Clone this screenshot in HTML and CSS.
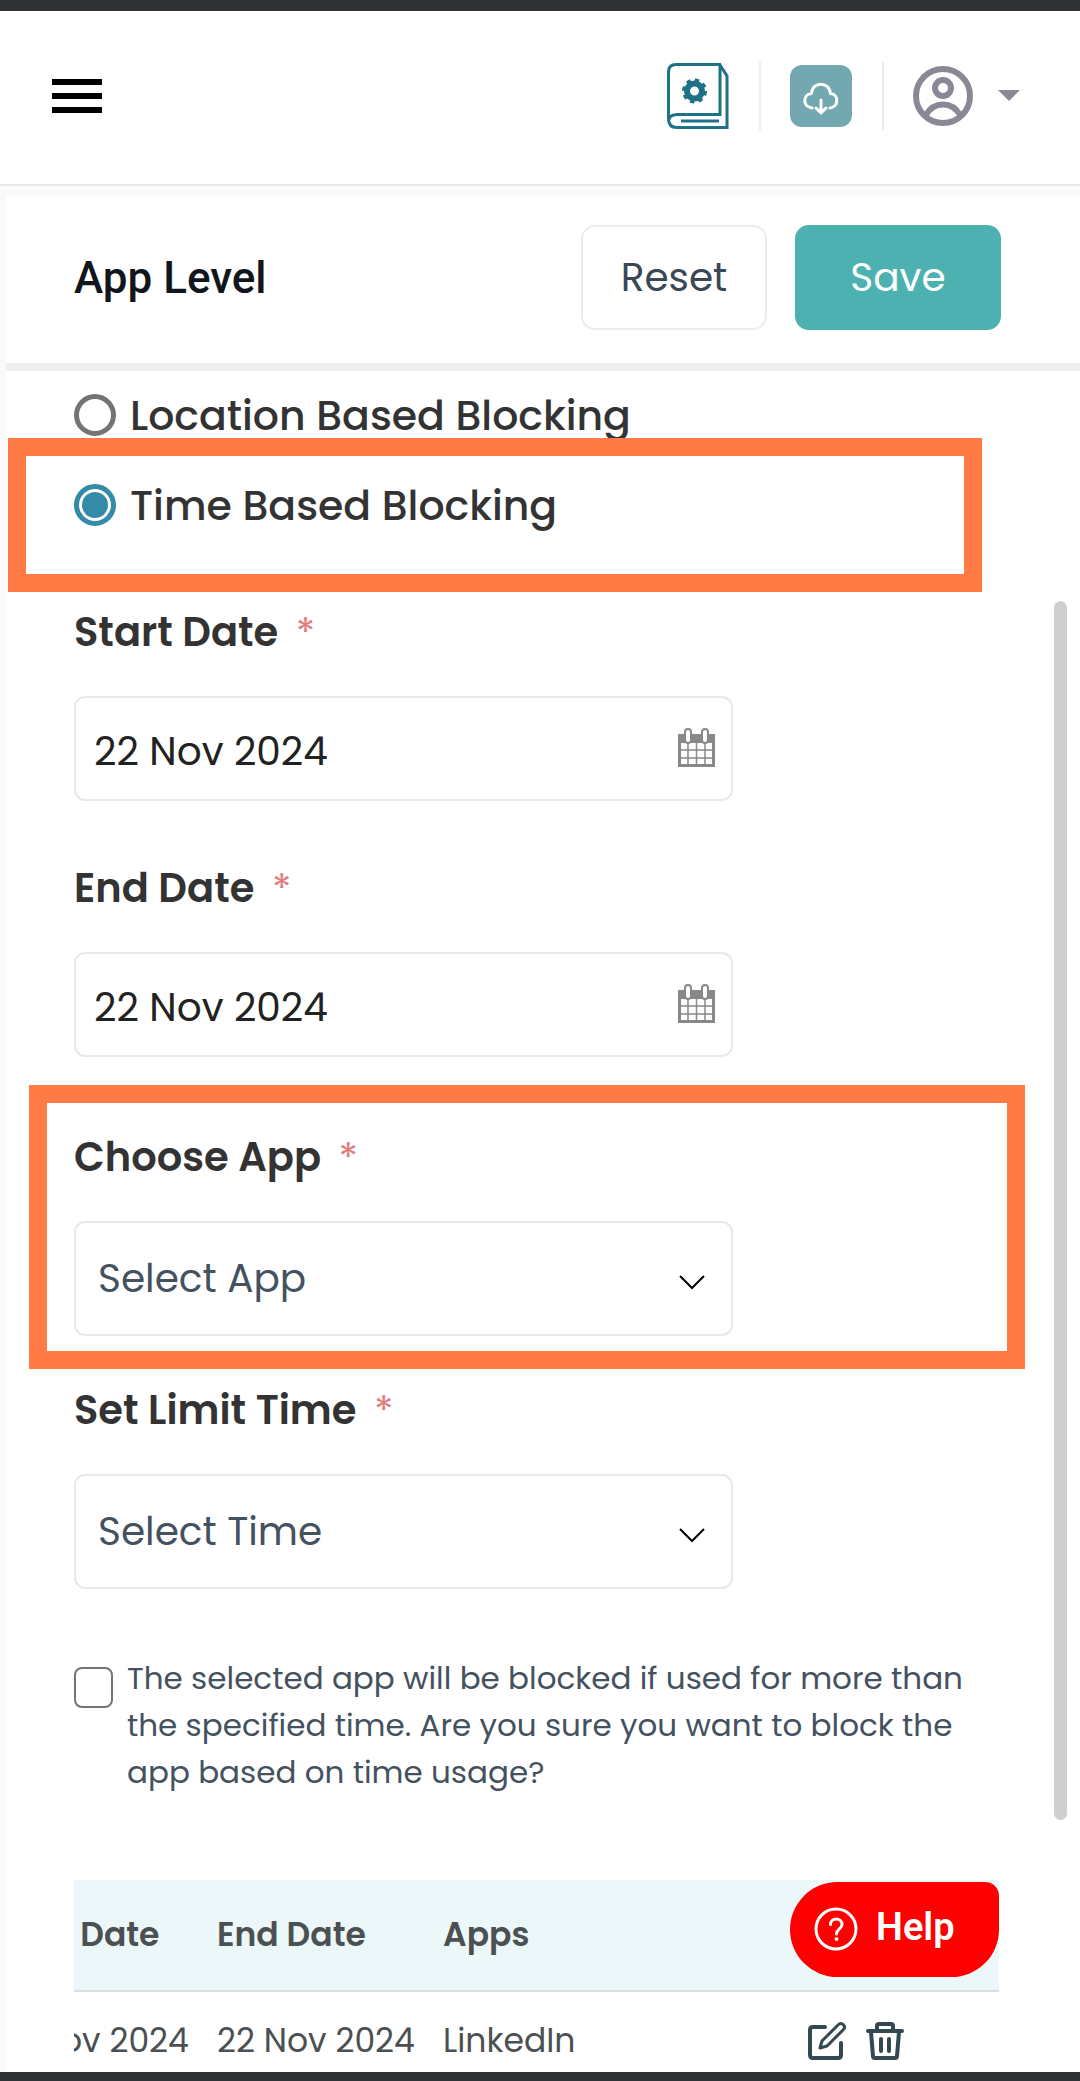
FILE: index.html
```html
<!DOCTYPE html>
<html lang="en">
<head>
<meta charset="utf-8">
<meta name="viewport" content="width=device-width, initial-scale=1">
<title>App Level</title>
<link rel="stylesheet" href="styles.css">
</head>
<body>
<header class="topbar">
  <button class="icon-button" type="button" aria-label="Menu">
    <svg width="50" height="34" viewBox="0 0 50 34"><path d="M0 3h50M0 17h50M0 31h50" stroke="#000" stroke-width="6"/></svg>
  </button>
  <nav class="tools" aria-label="Tools">
    <a class="tool" href="#guide" aria-label="User guide">
      <svg width="62" height="66" viewBox="0 0 62 66" fill="none" stroke="#1f7185" stroke-width="3">
        <path d="M54 1.500H9Q1.500 1.500 1.500 9V56Q1.500 64.500 10 64.500H60V13L53 2V51.500H10Q1.500 52 1.500 58M14 58H52"/>
        <circle cx="27.500" cy="28" r="7.500" stroke-width="6"/>
        <circle cx="27.500" cy="28" r="10.500" stroke-width="4" stroke-dasharray="4.200 4.047"/>
      </svg>
    </a>
    <a class="tool tool-split" href="#download" aria-label="Download">
      <span class="tile">
        <svg width="36" height="34" viewBox="0 0 36 34" fill="none" stroke="#fff" stroke-width="3" stroke-linecap="round" stroke-linejoin="round"><path d="M9 26C-1 25 0 12 8.500 11.500C9.500-1 26-1 27.500 11.500C36 12 36 25 27 26M18 18V30M13 26L18 31L23 26"/></svg>
      </span>
    </a>
    <a class="tool tool-split" href="#account" aria-label="Account">
      <svg width="60" height="60" viewBox="0 0 60 60" fill="none" stroke="#898896" stroke-width="6"><circle cx="30" cy="30" r="27"/><circle cx="30" cy="22" r="8"/><path d="M13 49C21 35 39 35 47 49"/></svg>
      <svg class="caret" width="22" height="11" viewBox="0 0 22 11"><path d="M0 0h22L11 11z" fill="#898896"/></svg>
    </a>
  </nav>
</header>
<main class="page">
  <div class="page-head">
    <h1>App Level</h1>
    <button class="btn btn-plain" type="reset" form="rules">Reset</button>
    <button class="btn btn-primary" type="submit" form="rules">Save</button>
  </div>
  <form class="rules" id="rules">
    <label class="radio-row"><input type="radio" name="mode" value="location">Location Based Blocking</label>
    <div class="marked marked-mode">
      <label class="radio-row"><input type="radio" name="mode" value="time" checked>Time Based Blocking</label>
    </div>
    <div class="field field-start">
      <label for="start">Start Date <span class="req">*</span></label>
      <div class="control">
        <input class="box" id="start" type="text" value="22 Nov 2024">
        <svg class="mark" width="37" height="40" viewBox="0 0 37 40"><use href="#calendar"/></svg>
      </div>
    </div>
    <div class="field">
      <label for="end">End Date <span class="req">*</span></label>
      <div class="control">
        <input class="box" id="end" type="text" value="22 Nov 2024">
        <svg class="mark" width="37" height="40" viewBox="0 0 37 40"><g id="calendar"><path d="M1.500 8h34v29.500h-34z" fill="#fff" stroke="#888" stroke-width="3"/><path d="M0 6h37v9H0z" fill="#888"/><path d="M10 14v24M18.500 14v24M27 14v24M2 22h33M2 30h33" stroke="#888" stroke-width="1.500"/><rect x="7" y="1" width="6" height="14" rx="3" fill="#fff" stroke="#888" stroke-width="2"/><rect x="24" y="1" width="6" height="14" rx="3" fill="#fff" stroke="#888" stroke-width="2"/></g></svg>
      </div>
    </div>
    <div class="field marked marked-app">
      <label for="app">Choose App <span class="req">*</span></label>
      <div class="control">
        <select class="box" id="app"><option>Select App</option></select>
        <svg class="mark chevron" width="26" height="15" viewBox="0 0 26 15"><path d="M1 1l12 12L25 1" fill="none" stroke="#000" stroke-width="2"/></svg>
      </div>
    </div>
    <div class="field field-limit">
      <label for="limit">Set Limit Time <span class="req">*</span></label>
      <div class="control">
        <select class="box" id="limit"><option>Select Time</option></select>
        <svg class="mark chevron" width="26" height="15" viewBox="0 0 26 15"><path d="M1 1l12 12L25 1" fill="none" stroke="#000" stroke-width="2"/></svg>
      </div>
    </div>
    <label class="confirm"><input type="checkbox"><span>The selected app will be blocked if used for more than the specified time. Are you sure you want to block the app based on time usage?</span></label>
    <div class="list">
      <div class="list-view">
        <table>
          <thead><tr><th>Start Date</th><th>End Date</th><th>Apps</th><th></th></tr></thead>
          <tbody><tr>
            <td>22 Nov 2024</td><td>22 Nov 2024</td><td>LinkedIn</td>
            <td>
              <div class="actions">
                <button class="icon-button" type="button" aria-label="Edit"><svg width="40" height="40" viewBox="0 0 40 40" fill="none" stroke="#344854" stroke-width="4" stroke-linecap="round" stroke-linejoin="round"><path d="M18 6H6Q3 6 3 9V34Q3 37 6 37H31Q34 37 34 34V22"/><path d="M13 27L15 20L31 4Q34 1 36.500 4Q39 6 36 9L20 25Z" stroke-width="3"/></svg></button>
                <button class="icon-button" type="button" aria-label="Delete"><svg width="40" height="40" viewBox="0 0 40 40" fill="none" stroke="#344854" stroke-width="4" stroke-linecap="round" stroke-linejoin="round"><path d="M3 10H37M12 9V5Q12 3 14 3H26Q28 3 28 5V9M6 11L8 35Q8 37 10 37H30Q32 37 32 35L34 11M16 18V30M24 18V30"/></svg></button>
              </div>
            </td>
          </tr></tbody>
        </table>
      </div>
      <button class="help" type="button">
        <svg width="44" height="44" viewBox="0 0 44 44" fill="none" stroke="#fff" stroke-width="3"><circle cx="22" cy="22" r="20"/><path d="M16.500 17.500C16.500 10 28 10 28 17.500C28 22 22.500 22 22.500 27" stroke-linecap="round"/><circle cx="22.500" cy="32" r="1.500" fill="#fff" stroke-width="1"/></svg>
        <span>Help</span>
      </button>
    </div>
  </form>
  <div class="scroll-thumb"></div>
</main>
</body>
</html>
```
FILE: styles.css
```css
* { box-sizing: border-box; }

body {
  margin: 0;
  min-height: 100vh;
  display: flex;
  flex-direction: column;
  border-top: 11px solid #303135;
  border-bottom: 9px solid #303135;
  background: #f9faf9;
  color: #333;
  font-family: "Poppins", "Inter", "Liberation Sans", sans-serif;
}

button, input, select { font: inherit; color: inherit; }
button { cursor: pointer; }
svg { display: block; flex: none; }

.icon-button { padding: 0; border: 0; background: none; }

.topbar {
  display: flex;
  align-items: center;
  justify-content: space-between;
  height: 175px;
  padding: 0 60px 4px 52px;
  background: #fff;
  border-bottom: 2px solid #e8e8e8;
}

.tools { display: flex; align-items: center; }
.tool { display: flex; align-items: center; height: 68px; padding-right: 30px; }
.tool:last-child { padding-right: 0; }
.tool-split { padding-left: 29px; border-left: 2px solid #ededed; }
.caret { margin-left: 25px; }
.tile {
  display: grid;
  place-items: center;
  width: 62px;
  height: 62px;
  padding-top: 6px;
  border-radius: 12px;
  background: #74a8b0;
}

.page {
  position: relative;
  flex: 1;
  margin: 10px 0 0 6px;
  background: #fff;
}

.page-head {
  display: flex;
  align-items: center;
  height: 175px;
  padding: 0 79px 4px 68px;
  border-bottom: 8px solid #efefef;
}

h1 {
  flex: 1;
  margin: 0;
  color: #10161c;
  font: 500 44px/56px "Roboto", sans-serif;
}

.btn {
  height: 105px;
  border: 2px solid #ececec;
  border-radius: 14px;
  background: #fff;
  color: #3a4855;
  font-size: 39px;
}
.btn-plain { width: 186px; }
.btn-primary { width: 206px; margin-left: 28px; border-color: #4db1b1; background: #4db1b1; color: #fff; }

.rules { padding: 14px 81px 4px 68px; }

.radio-row {
  display: flex;
  align-items: center;
  gap: 14px;
  height: 60px;
  font-size: 41px;
  font-weight: 500;
}
.radio-row input {
  appearance: none;
  display: grid;
  place-items: center;
  width: 42px;
  height: 42px;
  margin: 0;
  border: 5px solid #747474;
  border-radius: 50%;
}
.radio-row input:checked { border-color: #338ba7; }
.radio-row input:checked::before {
  content: "";
  width: 26px;
  height: 26px;
  border-radius: 50%;
  background: #338ba7;
}

/* Highlight frames laid over the form */
.marked { position: relative; }
.marked::after {
  content: "";
  position: absolute;
  border: 18px solid #ff7a45;
  pointer-events: none;
}
.marked-mode { margin: 30px 0 67px; }
.marked-mode::after { inset: -37px 17px -57px -66px; }
.marked-app::after { inset: -42px -26px -33px -45px; }

.field { margin-bottom: 70px; }
.field > label {
  display: block;
  margin-bottom: 34px;
  font-size: 40px;
  font-weight: 600;
  line-height: 60px;
}
.field-start { margin-bottom: 57px; }
.field-limit { margin-bottom: 66px; }
.field.marked-app { margin-bottom: 44px; }
.req { margin-left: 8px; color: #df7c7c; font-weight: 400; }

.control { position: relative; width: 659px; max-width: 100%; }
.box {
  appearance: none;
  display: block;
  width: 100%;
  height: 105px;
  padding: 6px 80px 0 18px;
  border: 2px solid #e9e9e9;
  border-radius: 11px;
  background: #fff;
  color: #222;
  font-size: 39px;
}
select.box { height: 115px; padding: 0 80px 0 22px; color: #44525f; }
.mark { position: absolute; right: 18px; top: 32px; pointer-events: none; }
.chevron { right: 28px; top: 54px; }

.confirm {
  display: flex;
  align-items: flex-start;
  gap: 14px;
  margin-bottom: 84px;
  color: #44525f;
  font-size: 31px;
  line-height: 47px;
}
.confirm input {
  appearance: none;
  flex: none;
  width: 39px;
  height: 41px;
  margin: 12px 0 0;
  border: 2px solid #747474;
  border-radius: 8px;
}
.confirm span { flex: 1; padding-right: 24px; }

.list { position: relative; }
.list-view { display: flex; justify-content: flex-end; overflow: hidden; }
table {
  flex: none;
  width: calc(100% + 83px);
  table-layout: fixed;
  border-collapse: collapse;
  color: #4b5052;
  font-size: 33px;
  text-align: left;
  white-space: nowrap;
}
th { width: 226px; height: 111px; padding: 0; background: #ebf7f8; border-bottom: 2px solid #d9dfe0; font-weight: 600; }
th:nth-child(3) { width: auto; }
th:last-child { width: 192px; }
td { height: 72px; padding: 25px 0 0; line-height: 47px; }
.actions { display: flex; gap: 18px; }

.help {
  position: absolute;
  top: 2px;
  right: 0;
  display: flex;
  align-items: center;
  gap: 18px;
  width: 209px;
  height: 95px;
  padding: 0 0 2px 24px;
  border: 0;
  border-radius: 48px 14px 48px 48px;
  background: #f00;
  color: #fff;
  font: 600 38px/48px "Roboto", sans-serif;
}
.help span { padding-bottom: 4px; }

.scroll-thumb {
  position: absolute;
  top: 405px;
  right: 13px;
  bottom: 252px;
  width: 13px;
  border-radius: 7px;
  background: #d0cfce;
}
```
